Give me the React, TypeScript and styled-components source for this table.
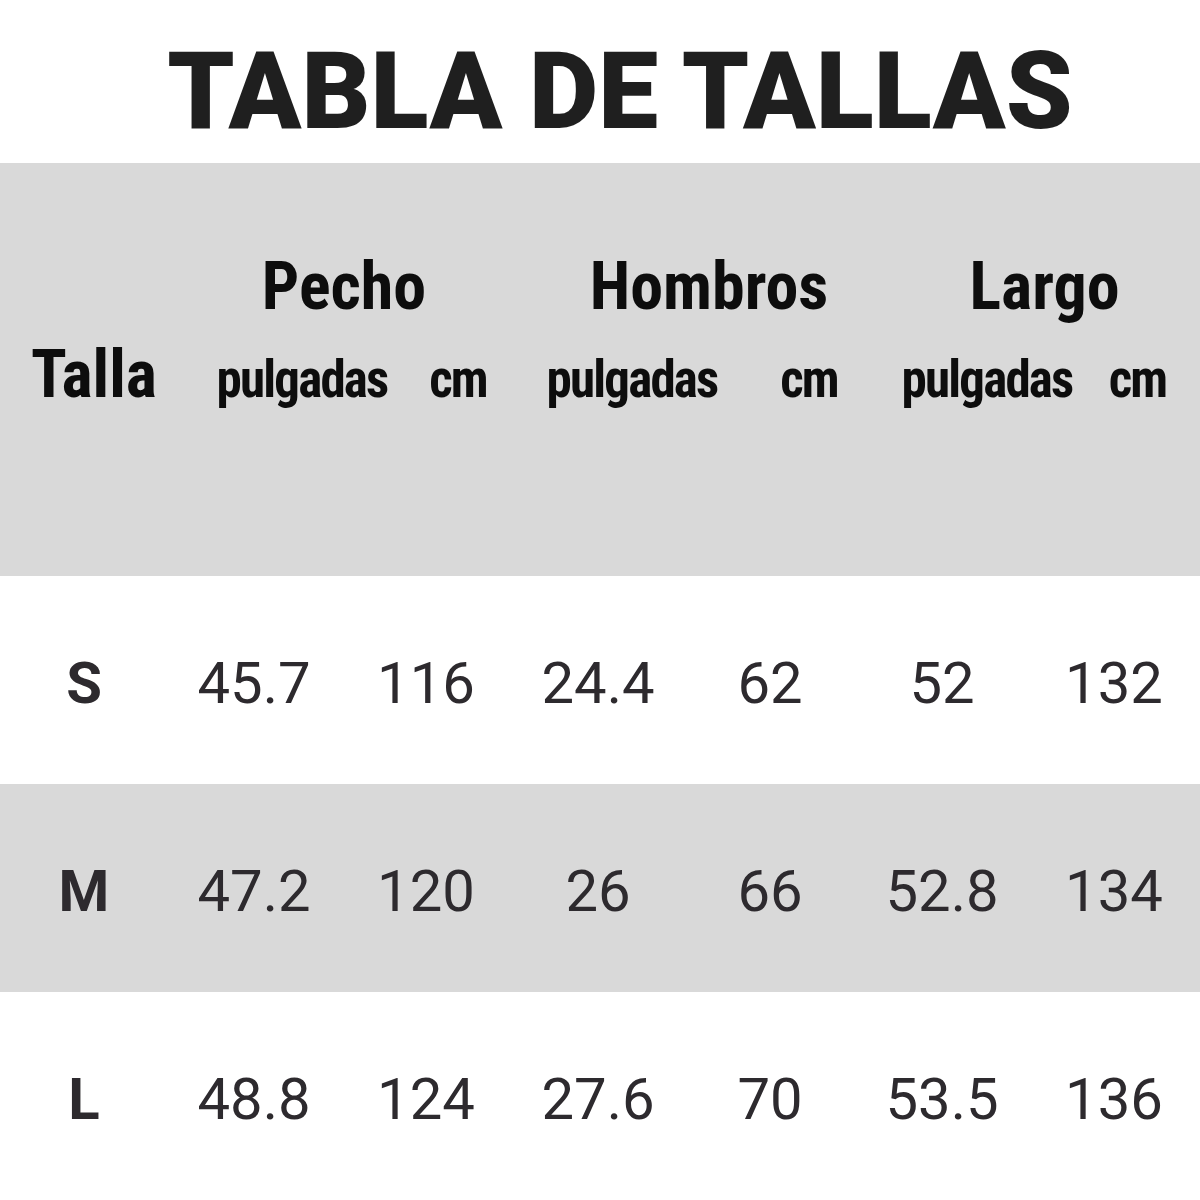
import styled, { createGlobalStyle } from 'styled-components';

const GlobalStyle = createGlobalStyle`
  html, body {
    margin: 0;
    padding: 0;
    background: #ffffff;
  }
  body {
    font-family: Roboto, 'Liberation Sans', sans-serif;
  }
`;

const groups = [
  { title: 'Pecho', cols: '228px 84px' },
  { title: 'Hombros', cols: '200px 154px' },
  { title: 'Largo', cols: '186px 115px' },
];

const rows = [
  { size: 'S', values: ['45.7', '116', '24.4', '62', '52', '132'], shaded: false },
  { size: 'M', values: ['47.2', '120', '26', '66', '52.8', '134'], shaded: true },
  { size: 'L', values: ['48.8', '124', '27.6', '70', '53.5', '136'], shaded: false },
];

export default function App() {
  return (
    <Page>
      <GlobalStyle />
      <Title>TABLA DE TALLAS</Title>
      <HeaderBand>
        <TallaCell>Talla</TallaCell>
        {groups.map((g) => (
          <Group key={g.title} $cols={g.cols}>
            <GroupTitle>{g.title}</GroupTitle>
            <Unit>pulgadas</Unit>
            <Unit>cm</Unit>
          </Group>
        ))}
      </HeaderBand>
      {rows.map((r) => (
        <Row key={r.size} $shaded={r.shaded}>
          <SizeCell>{r.size}</SizeCell>
          {r.values.map((v, i) => (
            <Value key={i}>{v}</Value>
          ))}
        </Row>
      ))}
    </Page>
  );
}

const Page = styled.div`
  width: 1200px;
  height: 1200px;
  overflow: hidden;
  background: #ffffff;
`;

const Title = styled.h1`
  margin: 0 0 18px;
  padding: 38px 0 0 40px;
  font-size: 107px;
  line-height: 1;
  font-weight: 900;
  text-align: center;
  color: #1f1f1f;
`;

const HeaderBand = styled.div`
  height: 413px;
  box-sizing: border-box;
  padding-top: 91px;
  background: #d9d9d9;
  display: grid;
  grid-template-columns: 188px 344px 362px 1fr;
  align-items: last baseline;
  align-content: start;
  color: #0d0d0d;
  font-stretch: 80%;
`;

const TallaCell = styled.div`
  justify-self: center;
  font-size: 66px;
  line-height: 1;
  font-weight: 700;
`;

const Group = styled.div<{ $cols: string }>`
  display: grid;
  grid-template-columns: ${(p) => p.$cols};
  row-gap: 34px;
  justify-items: center;
`;

const GroupTitle = styled.div`
  grid-column: 1 / span 2;
  font-size: 66px;
  line-height: 1;
  font-weight: 700;
`;

const Unit = styled.div`
  font-size: 51px;
  line-height: 1;
  font-weight: 700;
  font-stretch: 75%;
  letter-spacing: -1.8px;
`;

const Row = styled.div<{ $shaded: boolean }>`
  height: 208px;
  display: grid;
  grid-template-columns: 168px repeat(6, 172px);
  align-items: center;
  justify-items: center;
  background: ${(p) => (p.$shaded ? '#d9d9d9' : '#ffffff')};
  color: #2d2a2e;
`;

const SizeCell = styled.div`
  font-size: 58px;
  font-weight: 700;
  line-height: 1;
  padding-top: 6px;
  font-stretch: 94%;
`;

const Value = styled.div`
  font-size: 58px;
  font-weight: 400;
  line-height: 1;
  padding-top: 6px;
  font-stretch: 92%;
`;
